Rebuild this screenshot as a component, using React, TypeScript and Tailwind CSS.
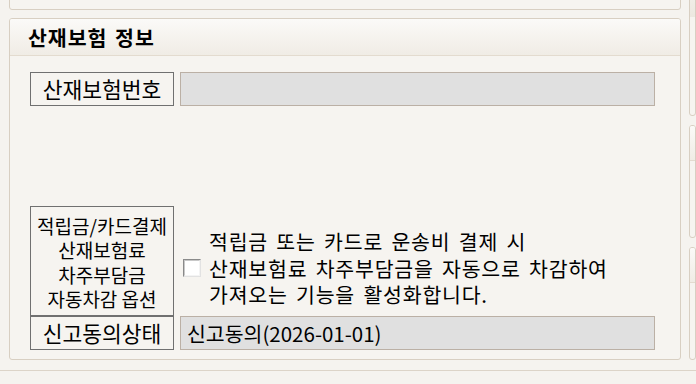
export default function App() {
  const font = "font-['Noto_Sans_CJK_KR','Noto_Sans',sans-serif]";
  return (
    <div className={`w-[696px] h-[384px] overflow-hidden bg-[#f5f3ef] text-black ${font}`}>
      <div className="h-[370px] flex overflow-hidden">
        <div className="ml-[9px] w-[672px] flex flex-col shrink-0">
          <div className="mt-[-30px] h-[40px] shrink-0 border border-[#d8cfc2] rounded-[3px] bg-[#f6f4f0]" />
          <div className="mt-[8px] h-[342px] shrink-0 border border-[#d8cfc2] rounded-[3px] bg-[#f6f4f0] flex flex-col overflow-hidden">
            <div className="h-[37px] shrink-0 border-b border-[#e3dbcf] bg-gradient-to-b from-[#fbfaf8] to-[#f0ece5] flex items-center pl-[18px]">
              <span className="text-[20.5px] font-bold leading-none tracking-[1px] [word-spacing:2px]">산재보험 정보</span>
            </div>
            <div className="flex flex-col pl-[20px] pt-[16px]">
              <div className="flex h-[34px]">
                <div className="w-[144px] h-full border border-[#707070] flex items-center justify-center text-[21.5px] leading-none">
                  산재보험번호
                </div>
                <div className="ml-[6px] w-[475px] h-full border border-[#bbb0a5] bg-[#e0e0e0]" />
              </div>
              <div className="flex h-[110px] mt-[100px]">
                <div className="w-[144px] h-full border border-[#707070] flex flex-col items-center justify-center text-[19px] leading-[24.5px] text-center pt-[3px]">
                  <span>적립금/카드결제</span>
                  <span>산재보험료</span>
                  <span>차주부담금</span>
                  <span>자동차감 옵션</span>
                </div>
                <div className="flex items-center pt-[14px]">
                  <div className="ml-[9px] w-[18px] h-[18px] border border-t-[#8a8a8a] border-l-[#8a8a8a] border-r-[#e2e2e2] border-b-[#e2e2e2] bg-white shrink-0">
                    <div className="w-full h-full border border-t-[#c8c8c8] border-l-[#c8c8c8] border-r-[#f4f4f4] border-b-[#f4f4f4]" />
                  </div>
                  <div className="ml-[8px] text-[20.5px] leading-[26.5px] tracking-[0.8px] [word-spacing:3px]">
                    <div>적립금 또는 카드로 운송비 결제 시</div>
                    <div>산재보험료 차주부담금을 자동으로 차감하여</div>
                    <div>가져오는 기능을 활성화합니다.</div>
                  </div>
                </div>
              </div>
              <div className="flex h-[34px]">
                <div className="w-[144px] h-full border border-[#707070] flex items-center justify-center text-[21.5px] leading-none">
                  신고동의상태
                </div>
                <div className="ml-[6px] w-[475px] h-full border border-[#bbb0a5] bg-[#e0e0e0] flex items-center pl-[6px] text-[20.5px] leading-none">
                  신고동의(2026-01-01)
                </div>
              </div>
            </div>
          </div>
        </div>
        <div className="ml-[8px] flex-1 flex flex-col">
          <div className="mt-[-40px] h-[156px] shrink-0 border border-[#d8cfc2] rounded-[3px] bg-[#f6f4f0] overflow-hidden">
            <div className="h-[56px] bg-gradient-to-b from-[#faf9f6] to-[#ece8e0]" />
          </div>
          <div className="mt-[9px] h-[113px] shrink-0 border border-[#d8cfc2] rounded-[3px] bg-[#f6f4f0] overflow-hidden">
            <div className="h-[35px] border-b border-[#e3dbcf] bg-gradient-to-b from-[#fbfaf8] to-[#f0ece5]" />
          </div>
          <div className="mt-[9px] h-[113px] shrink-0 border border-[#d8cfc2] rounded-[3px] bg-[#f6f4f0] overflow-hidden">
            <div className="h-[35px] border-b border-[#e3dbcf] bg-gradient-to-b from-[#fbfaf8] to-[#f0ece5]" />
          </div>
        </div>
      </div>
      <div className="h-px bg-[#dcd4c8]" />
    </div>
  );
}
